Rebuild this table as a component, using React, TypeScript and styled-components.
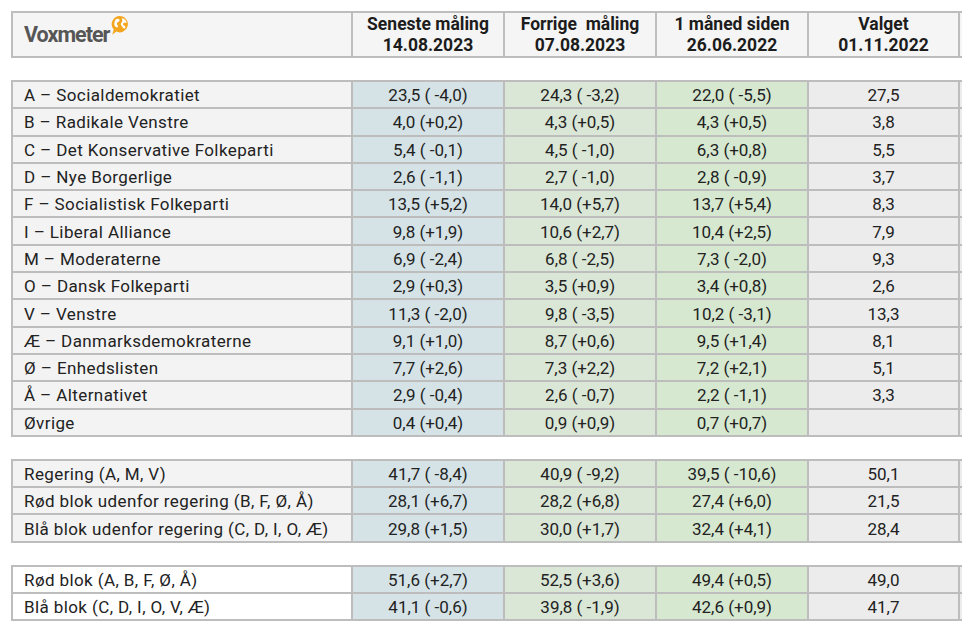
import styled, { createGlobalStyle } from 'styled-components'

const GlobalStyle = createGlobalStyle`
  html, body {
    margin: 0;
    padding: 0;
    background: #ffffff;
    overflow: hidden;
  }
  body {
    font-family: Roboto, "Liberation Sans", Arial, sans-serif;
    color: #202020;
  }
`

type Tone = 'label' | 'plain' | 'latest' | 'previous' | 'month' | 'election' | 'head'

const toneColors: Record<Tone, string> = {
  head: '#f5f5f5',
  label: '#f3f3f3',
  plain: '#ffffff',
  latest: '#d5e3e6',
  previous: '#dae6d6',
  month: '#d6e8d0',
  election: '#ececec',
}

type Row = [string, string, string, string, string]

const parties: Row[] = [
  ['A – Socialdemokratiet', '23,5 ( -4,0)', '24,3 ( -3,2)', '22,0 ( -5,5)', '27,5'],
  ['B – Radikale Venstre', '4,0 (+0,2)', '4,3 (+0,5)', '4,3 (+0,5)', '3,8'],
  ['C – Det Konservative Folkeparti', '5,4 ( -0,1)', '4,5 ( -1,0)', '6,3 (+0,8)', '5,5'],
  ['D – Nye Borgerlige', '2,6 ( -1,1)', '2,7 ( -1,0)', '2,8 ( -0,9)', '3,7'],
  ['F – Socialistisk Folkeparti', '13,5 (+5,2)', '14,0 (+5,7)', '13,7 (+5,4)', '8,3'],
  ['I – Liberal Alliance', '9,8 (+1,9)', '10,6 (+2,7)', '10,4 (+2,5)', '7,9'],
  ['M – Moderaterne', '6,9 ( -2,4)', '6,8 ( -2,5)', '7,3 ( -2,0)', '9,3'],
  ['O – Dansk Folkeparti', '2,9 (+0,3)', '3,5 (+0,9)', '3,4 (+0,8)', '2,6'],
  ['V – Venstre', '11,3 ( -2,0)', '9,8 ( -3,5)', '10,2 ( -3,1)', '13,3'],
  ['Æ – Danmarksdemokraterne', '9,1 (+1,0)', '8,7 (+0,6)', '9,5 (+1,4)', '8,1'],
  ['Ø – Enhedslisten', '7,7 (+2,6)', '7,3 (+2,2)', '7,2 (+2,1)', '5,1'],
  ['Å – Alternativet', '2,9 ( -0,4)', '2,6 ( -0,7)', '2,2 ( -1,1)', '3,3'],
  ['Øvrige', '0,4 (+0,4)', '0,9 (+0,9)', '0,7 (+0,7)', ''],
]

const government: Row[] = [
  ['Regering (A, M, V)', '41,7 ( -8,4)', '40,9 ( -9,2)', '39,5 ( -10,6)', '50,1'],
  ['Rød blok udenfor regering (B, F, Ø, Å)', '28,1 (+6,7)', '28,2 (+6,8)', '27,4 (+6,0)', '21,5'],
  ['Blå blok udenfor regering (C, D, I, O, Æ)', '29,8 (+1,5)', '30,0 (+1,7)', '32,4 (+4,1)', '28,4'],
]

const blocs: Row[] = [
  ['Rød blok (A, B, F, Ø, Å)', '51,6 (+2,7)', '52,5 (+3,6)', '49,4 (+0,5)', '49,0'],
  ['Blå blok (C, D, I, O, V, Æ)', '41,1 ( -0,6)', '39,8 ( -1,9)', '42,6 (+0,9)', '41,7'],
]

const headings: [string, string][] = [
  ['Seneste måling', '14.08.2023'],
  ['Forrige\u00a0 måling', '07.08.2023'],
  ['1 måned siden', '26.06.2022'],
  ['Valget', '01.11.2022'],
]

const valueTones: Tone[] = ['latest', 'previous', 'month', 'election']

const Logo = () => (
  <LogoWrap>
    <LogoText>Voxmeter</LogoText>
    <LogoMark viewBox="0 0 20 22" aria-hidden>
      <path d="M10.5 1 A8.6 8.6 0 1 1 6.6 17.4 L2.4 20.8 L3.9 15.2 A8.6 8.6 0 0 1 10.5 1 Z" fill="#f3a51d" />
      <path d="M6.8 4.2 C8.8 3.4 10.6 4.4 10 6.1 C9.4 7.6 7.5 7.2 7.2 8.8 C6.9 10.2 8.7 10.6 8.4 12.3 C8.1 13.6 6.3 13.2 5.3 11.9 C3.9 10 4.5 5.5 6.8 4.2 Z" fill="#ffffff" />
      <path d="M12.8 3.4 C15.1 3.8 17.1 5.6 17.5 8.2 C16.2 8.4 15.2 7.8 14.1 8.5 C13.1 9.1 13.8 10.6 15 11 C16.1 11.4 16.7 12.4 15.8 14 C14.7 14.7 13.4 13.6 12.9 12.4 C12.3 11 11.2 10.6 11.4 9.1 C11.6 7.8 13.2 7.4 13 6 C12.9 5.1 12.1 4.2 12.8 3.4 Z" fill="#ffffff" />
    </LogoMark>
  </LogoWrap>
)

const Section = ({ rows, labelTone }: { rows: Row[]; labelTone: Tone }) => (
  <Block>
    {rows.map((row) => (
      <Line key={row[0]}>
        <LabelCell $tone={labelTone}>{row[0]}</LabelCell>
        {row.slice(1).map((value, i) => (
          <ValueCell key={i} $tone={valueTones[i]}>{value}</ValueCell>
        ))}
        <ValueCell $tone="election" />
      </Line>
    ))}
  </Block>
)

export default function App() {
  return (
    <>
      <GlobalStyle />
      <Page>
        <HeaderBlock>
          <HeadLogoCell>
            <Logo />
          </HeadLogoCell>
          {headings.map(([title, date]) => (
            <HeadCell key={date}>
              <span>{title}</span>
              <span>{date}</span>
            </HeadCell>
          ))}
          <HeadCell />
        </HeaderBlock>
        <Section rows={parties} labelTone="label" />
        <Section rows={government} labelTone="label" />
        <Section rows={blocs} labelTone="plain" />
      </Page>
    </>
  )
}

const columns = '340px 152px 152px 152px 151px 60px'
const line = '2px solid #bdbdbd'

const Page = styled.div`
  display: flex;
  flex-direction: column;
  gap: 22px;
  width: 1030px;
  padding: 11px 0 0 11px;
`

const HeaderBlock = styled.div`
  display: grid;
  grid-template-columns: ${columns};
  grid-template-rows: 45px;
  border-top: ${line};
  border-left: ${line};
`

const HeadCell = styled.div`
  box-sizing: border-box;
  background: ${toneColors.head};
  border-right: ${line};
  border-bottom: ${line};
  display: flex;
  flex-direction: column;
  align-items: center;
  justify-content: center;
  font-weight: 700;
  font-size: 17.5px;
  line-height: 21px;
  color: #1c1c1c;
  white-space: pre;
`

const HeadLogoCell = styled(HeadCell)`
  align-items: flex-start;
  justify-content: flex-start;
  padding: 2px 0 0 11px;
`

const LogoWrap = styled.div`
  display: flex;
  align-items: flex-start;
`

const LogoText = styled.span`
  font-family: Roboto, "Liberation Sans", sans-serif;
  font-weight: 700;
  font-size: 21.5px;
  letter-spacing: -1px;
  color: #565656;
  line-height: 22px;
  margin-top: 9px;
`

const LogoMark = styled.svg`
  width: 19px;
  height: 21px;
  margin-left: 1px;
`

const Block = styled.div`
  display: flex;
  flex-direction: column;
  border-top: ${line};
  border-left: ${line};
`

const Line = styled.div`
  display: grid;
  grid-template-columns: ${columns};
  height: 27.3px;
`

const Cell = styled.div<{ $tone: Tone }>`
  box-sizing: border-box;
  background: ${(p) => toneColors[p.$tone]};
  border-right: ${line};
  border-bottom: ${line};
  display: flex;
  align-items: center;
  padding-top: 1px;
  font-size: 17px;
  color: #222222;
  white-space: pre;
  overflow: hidden;
`

const LabelCell = styled(Cell)`
  padding-left: 11px;
  letter-spacing: 0.4px;
`

const ValueCell = styled(Cell)`
  justify-content: center;
`
